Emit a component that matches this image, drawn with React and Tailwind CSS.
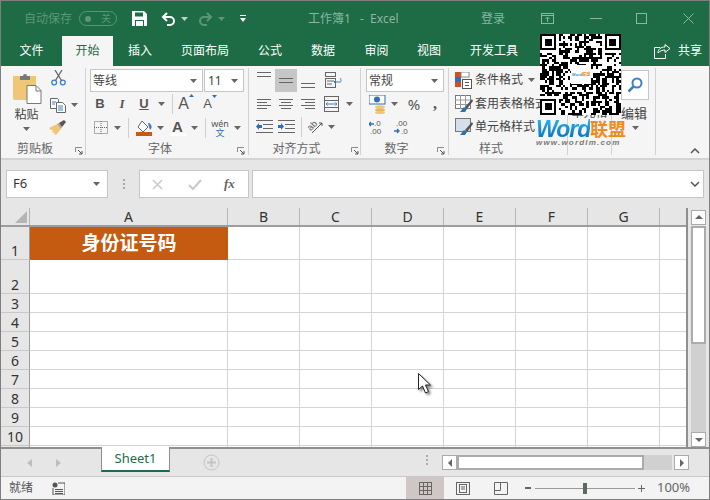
import React from "react";

const Caret = ({ className = "" }) => (
    <svg className={className} width="7" height="4" viewBox="0 0 7 4"><path d="M0 0h7L3.5 4z" fill="#666" /></svg>
);

const Launcher = ({ className = "" }) => (
    <svg className={"absolute " + className} width="8" height="8" viewBox="0 0 8 8" fill="none">
        <path d="M.5 5V.5H7" stroke="#8a8a8a" /><path d="M3 3l4 4M7 4v3H4" stroke="#555" />
    </svg>
);

const Sep = ({ className = "" }) => <div className={"w-px h-[20px] bg-[#cfcfcf] " + className}></div>;

// 3 or 4 strokes, the alignment buttons
const Lines = ({ y = [1, 6, 11], x = [[0, 14], [0, 14], [0, 14]], c = "#666", w = 14, h = 13 }) => (
    <svg width={w} height={h} viewBox={`0 0 ${w} ${h}`}>
        {y.map((v, i) => <rect key={i} x={x[i][0]} y={v} width={x[i][1] - x[i][0]} height="1" fill={c} />)}
    </svg>
);

const Paste = () => (
    <svg width="30" height="32" viewBox="0 0 30 32">
        <path d="M1 4h23v24H3a2 2 0 0 1-2-2z" fill="#f0c678" />
        <path d="M8 4h3a2 2 0 0 1 4 0h3v4H8z" fill="#77787a" />
        <path d="M15 13.5h9l5 5v13H15z" fill="#fff" stroke="#777" />
        <path d="M24 14v5h5" fill="none" stroke="#777" />
    </svg>
);

const Scissors = () => (
    <svg width="15" height="16" viewBox="0 0 15 16" fill="none">
        <circle cx="3.2" cy="12.5" r="2.4" stroke="#3f7fbf" strokeWidth="1.3" />
        <circle cx="11.8" cy="12.5" r="2.4" stroke="#3f7fbf" strokeWidth="1.3" />
        <path d="M4.5 10.5L11 0M10.5 10.5L4 0" stroke="#666" strokeWidth="1.3" />
    </svg>
);

const Copy = () => (
    <svg width="16" height="15" viewBox="0 0 16 15" fill="none">
        <path d="M.5.5h7l1 1v9H.5z" fill="#fff" stroke="#666" />
        <path d="M6.5 4.5h6l3 3v7h-9z" fill="#fff" stroke="#666" />
        <path d="M8 8h5M8 10h5M8 12h5M2 4h4M2 6h3" stroke="#3f7fbf" />
    </svg>
);

const Painter = () => (
    <svg width="18" height="15" viewBox="0 0 18 15">
        <path d="M0 8l8-4 4 5-5 6-2-1 1-2-2 1-1-1 1-2-2 0z" fill="#f0c678" />
        <path d="M8 4l2-1 3 4-1 2z" fill="#b9a27a" />
        <path d="M10 3l5-3 2 2-4 5z" fill="#555" />
    </svg>
);

const Borders = () => (
    <svg width="14" height="13" viewBox="0 0 14 13" fill="none" stroke="#666" strokeDasharray="1 1">
        <rect x=".5" y=".5" width="13" height="12" /><path d="M7 0v13M0 6.5h14" />
    </svg>
);

const Bucket = () => (
    <svg width="17" height="16" viewBox="0 0 17 16">
        <path d="M6 1l6 6-5 5-5-5z" fill="#fff" stroke="#666" />
        <path d="M12 3c2 0 4 2 3.5 5l-1.500 2-1-3z" fill="#3f7fbf" />
        <rect x="0" y="12" width="16" height="4" fill="#c55a11" />
    </svg>
);

const Wrap = () => (
    <svg width="17" height="16" viewBox="0 0 17 16" fill="none">
        <rect x=".5" y=".5" width="10" height="4" stroke="#666" />
        <rect x=".5" y="6.500" width="10" height="9" stroke="#666" />
        <path d="M2 9h7M2 12h5" stroke="#666" />
        <path d="M9 10h6c2 0 1-3 0-4M9 10l2-2M9 10l2 2" stroke="#3f7fbf" />
    </svg>
);

const Merge = () => (
    <svg width="15" height="16" viewBox="0 0 15 16" fill="none">
        <rect x=".5" y=".5" width="14" height="15" stroke="#666" />
        <path d="M0 4.500h15M0 11.500h15" stroke="#666" />
        <path d="M2 8h11M3.500 6.500L2 8l1.500 1.500M11.500 6.500L13 8l-1.500 1.500" stroke="#3f7fbf" />
    </svg>
);

const Indent = ({ flip }) => (
    <svg width="17" height="13" viewBox="0 0 17 13">
        {[0, 4, 8, 12].map(y => <rect key={y} x={y === 4 || y === 8 ? 7 : 0} y={y} width={y === 4 || y === 8 ? 10 : 17} height="1" fill="#666" />)}
        <path d={flip ? "M0 5h3V3l3 3.500-3 3.500V8H0z" : "M6 5H3V3L0 6.500 3 10V8h3z"} fill="#2f6fb5" />
    </svg>
);

const Orient = () => (
    <svg width="17" height="17" viewBox="0 0 17 17" fill="none">
        <text x="1" y="11" fontSize="9" fill="#555" fontFamily="Liberation Sans" transform="rotate(-45 5 9)">ab</text>
        <path d="M5 15L15 5M15 5h-3M15 5v3" stroke="#555" />
    </svg>
);

const Money = () => (
    <svg width="17" height="19" viewBox="0 0 17 19">
        <rect x="0" y="0" width="16" height="9" fill="#fff" stroke="#2f6fb5" />
        <circle cx="8" cy="4.500" r="3" fill="#2f6fb5" />
        <ellipse cx="11" cy="12" rx="5" ry="1.800" fill="#f0c678" />
        <ellipse cx="11" cy="15" rx="5" ry="1.800" fill="#e8b95c" />
        <ellipse cx="11" cy="17.500" rx="5" ry="1.500" fill="#f0c678" />
    </svg>
);

const Decimal = ({ more }) => (
    <svg width="15" height="16" viewBox="0 0 15 16">
        <text x={more ? 2 : 5} y="7" fontSize="8" fill="#555" fontFamily="Liberation Sans">{more ? ".00" : ".0"}</text>
        <text x={more ? 7 : 1} y="15" fontSize="8" fill="#555" fontFamily="Liberation Sans">{more ? ".0" : ".00"}</text>
        {more
            ? <path d="M0 12h5M3 10l2 2-2 2" stroke="#2f6fb5" strokeWidth="1.300" fill="none" />
            : <path d="M0 5h5M2 3L0 5l2 2" stroke="#2f6fb5" strokeWidth="1.300" fill="none" />}
    </svg>
);

const CondFormat = () => (
    <svg width="17" height="17" viewBox="0 0 17 17">
        <rect x="0" y="0" width="6" height="5" fill="#c9502c" /><rect x="6" y="0" width="8" height="5" fill="#fff" stroke="#888" />
        <rect x="0" y="5" width="6" height="5" fill="#2f6fb5" /><rect x="0" y="10" width="6" height="5" fill="#c9502c" />
        <rect x="7.500" y="7.500" width="9" height="9" fill="#fff" stroke="#555" />
        <path d="M10 10.500h4M10 13.500h4" stroke="#555" />
    </svg>
);

const TableFmt = ({ filled }) => (
    <svg width="18" height="18" viewBox="0 0 18 18">
        <rect x=".5" y=".5" width="15" height="13" fill={filled ? "#d5dfea" : "#fff"} stroke="#777" />
        {!filled && <path d="M5.500 0v14M10.500 0v14M0 5h16M0 9.500h16" stroke="#999" />}
        <path d="M17 4l-7 8 2 2 6-8z" fill="#555" />
        <path d="M9 12l3 2-2 3H5z" fill="#2f6fb5" />
    </svg>
);

const Search = () => (
    <svg width="16" height="16" viewBox="0 0 16 16" fill="none">
        <circle cx="10" cy="6" r="4.500" stroke="#3f7fbf" strokeWidth="2" />
        <path d="M6.500 9.500L1.500 14.500" stroke="#3f7fbf" strokeWidth="2.500" />
    </svg>
);

const Share = () => (
    <svg width="17" height="16" viewBox="0 0 17 16" fill="none" stroke="#fff">
        <path d="M6 4.500H.5v11h11V11" />
        <path d="M4 10c0-4 3-6 7-6V1.500L16 5.500 11 9.500V7c-3 0-5 1-7 3z" />
    </svg>
);

// looks like a QR code, same finder squares and density as the picture
const qrCells = () => {
    const n = 35;
    let seed = 4711;
    const cells = [];
    const finder = (x, y) => x >= 0 && x < 7 && y >= 0 && y < 7 && (x === 0 || x === 6 || y === 0 || y === 6 || (x >= 2 && x <= 4 && y >= 2 && y <= 4));
    for (let y = 0; y < n; y++) {
        for (let x = 0; x < n; x++) {
            seed = (seed * 1103515245 + 12345) & 0x7fffffff;
            let on = ((seed >> 12) & 7) < 4;
            if ((x < 8 && y < 8) || (x >= n - 8 && y < 8) || (x < 8 && y >= n - 8)) {
                on = finder(x, y) || finder(x - (n - 7), y) || finder(x, y - (n - 7));
            }
            if (on) cells.push([x, y]);
        }
    }
    return cells;
};

const QR = () => (
    <svg width="81" height="81" viewBox="0 0 35 35" shapeRendering="crispEdges">
        <rect width="35" height="35" fill="#fff" />
        {qrCells().map(([x, y]) => <rect key={x + "-" + y} x={x} y={y} width="1" height="1" fill="#000" />)}
    </svg>
);

const Tab = ({ w, active, children }) => (
    <div className={"flex items-center justify-center h-full text-[12px] " + w + (active ? " bg-[#f5f5f5] text-[#1d6c45]" : " text-white")}>{children}</div>
);

const Label = ({ className = "pr-[16px]", children }) => <div className={"mt-auto h-[14px] -mb-px text-center text-[12px] leading-[14px] text-[#666] " + className}>{children}</div>;

const Group = ({ w, children }) => (
    <div className={"relative flex flex-col h-[87px] mt-[2px] border-r border-[#d2d2d2] shrink-0 " + w}>{children}</div>
);

const colHeads = [["A", "w-[198px]"], ["B", "w-[72px]"], ["C", "w-[72px]"], ["D", "w-[72px]"], ["E", "w-[72px]"], ["F", "w-[72px]"], ["G", "w-[72px]"], ["", "w-[28px]"]];
const rows = [["1", "h-[33px]"], ["2", "h-[34px]"], ...["3", "4", "5", "6", "7", "8", "9", "10", ""].map(n => [n, "h-[19px]"])];

const App = () => {
    return (
        <div className="w-[710px] h-[500px] flex flex-col overflow-hidden border border-[#7f7f7f] bg-[#e6e6e6] relative font-['Noto_Sans','Noto_Sans_CJK_SC',sans-serif]">
            {/* title bar */}
            <div className="h-[35px] shrink-0 bg-[#1d6c45] flex items-center text-[12px] text-[#8db5a1] whitespace-nowrap">
                <span className="ml-[23px] w-[49px] text-[12px] text-[#5c9679]">自动保存</span>
                <div className="ml-[6px] w-[38px] h-[15px] rounded-full border border-[#5c9679] flex items-center px-[5px] justify-between">
                    <span className="w-[6px] h-[6px] rounded-full bg-[#5c9679]"></span>
                    <span className="text-[10px] text-[#5c9679]">关</span>
                </div>
                <svg className="ml-[15px]" width="15" height="15" viewBox="0 0 15 15"><path d="M0 0h12l3 3v12H0z" fill="#fff" /><rect x="3" y="1.500" width="8" height="4" fill="#1d6c45" /><rect x="3" y="9" width="9" height="6" fill="#1d6c45" /><rect x="4" y="10" width="7" height="5" fill="#fff" /></svg>
                <svg className="ml-[14px]" width="15" height="14" viewBox="0 0 15 14" fill="none" stroke="#fff" strokeWidth="2"><path d="M6 1L2 5l4 4M2 5h7a4 4 0 0 1 0 8H6" /></svg>
                <Caret className="ml-[5px] brightness-200" />
                <svg className="ml-[10px]" width="15" height="14" viewBox="0 0 15 14" fill="none" stroke="#5c9679" strokeWidth="2"><path d="M9 1l4 4-4 4M13 5H6a4 4 0 0 0 0 8h3" /></svg>
                <svg className="ml-[5px]" width="7" height="4" viewBox="0 0 7 4"><path d="M0 0h7L3.500 4z" fill="#5c9679" /></svg>
                <svg className="ml-[15px]" width="6" height="7" viewBox="0 0 6 7" fill="#fff"><rect width="6" height="1" /><path d="M0 3h6L3 7z" /></svg>
                <span className="ml-[62px] w-[43px]">工作簿1</span>
                <span className="ml-[9px] w-[42px]">-&nbsp;&nbsp;Excel</span>
                <span className="ml-[79px] w-[24px]">登录</span>
                <svg className="ml-[36px]" width="13" height="11" viewBox="0 0 13 11" fill="none" stroke="#8db5a1"><rect x=".5" y=".5" width="12" height="10" /><path d="M0 2.500h13M6.500 9V4.500M4.500 6l2-2 2 2" /></svg>
                <svg className="ml-[36px]" width="12" height="1" viewBox="0 0 12 1"><rect width="12" height="1" fill="#8db5a1" /></svg>
                <svg className="ml-[34px]" width="11" height="11" viewBox="0 0 11 11" fill="none" stroke="#8db5a1"><rect x=".5" y=".5" width="10" height="10" /></svg>
                <svg className="ml-[36px]" width="11" height="11" viewBox="0 0 11 11" stroke="#8db5a1"><path d="M.5.5l10 10M10.500.5l-10 10" /></svg>
            </div>

            {/* tabs */}
            <div className="h-[30px] shrink-0 bg-[#1d6c45] flex items-center">
                <Tab w="w-[61px]">文件</Tab>
                <Tab w="w-[51px]" active>开始</Tab>
                <Tab w="w-[54px]">插入</Tab>
                <Tab w="w-[76px]">页面布局</Tab>
                <Tab w="w-[54px]">公式</Tab>
                <Tab w="w-[52px]">数据</Tab>
                <Tab w="w-[55px]">审阅</Tab>
                <Tab w="w-[50px]">视图</Tab>
                <Tab w="w-[80px]">开发工具</Tab>
                <div className="ml-auto mr-[7px] flex items-center gap-[7px] text-[12px] text-white"><Share />共享</div>
            </div>

            {/* ribbon */}
            <div className="h-[94px] shrink-0 bg-[#f5f5f5] border-b-2 border-[#d4d4d4] flex text-[#444] whitespace-nowrap">
                <Group w="w-[85px]">
                    <div className="flex">
                        <div className="w-[48px] flex flex-col items-center pl-[3px] pt-[4px]">
                            <Paste />
                            <span className="mt-[3px] text-[12px] leading-[16px]">粘贴</span>
                            <Caret className="mt-[4px]" />
                        </div>
                        <div className="flex flex-col pt-[2px]">
                            <div className="h-[23px] pl-[2px]"><Scissors /></div>
                            <div className="h-[24px] flex items-center gap-[5px] pl-[1px]"><Copy /><Caret /></div>
                            <div className="h-[22px] pt-[3px]"><Painter /></div>
                        </div>
                    </div>
                    <Label>剪贴板</Label>
                    <Launcher className="left-[74px] bottom-0" />
                </Group>

                <Group w="w-[163px]">
                    <div className="flex gap-px pl-[4px] pt-px">
                        <div className="w-[113px] h-[23px] bg-white border border-[#c6c6c6] flex items-center justify-between pl-[2px] pr-[5px] text-[12px]">等线<Caret /></div>
                        <div className="w-[40px] h-[23px] bg-white border border-[#c6c6c6] flex items-center justify-between pl-[3px] pr-[5px] text-[12px]">11<Caret /></div>
                    </div>
                    <div className="flex items-center h-[24px] pl-[4px] text-[#555]">
                        <span className="w-[20px] text-center text-[13px] font-bold font-['Liberation_Sans']">B</span>
                        <span className="w-[24px] text-center text-[13px] italic font-bold font-['Liberation_Serif']">I</span>
                        <span className="w-[20px] text-center text-[13px] font-bold underline font-['Liberation_Sans']">U</span>
                        <div className="w-[14px] flex justify-center"><Caret /></div>
                        <Sep className="ml-[4px]" />
                        <div className="w-[26px] flex justify-center items-start text-[16px] font-['Liberation_Sans']">A<svg className="mt-[2px]" width="5" height="3" viewBox="0 0 5 3"><path d="M0 3h5L2.500 0z" fill="#2f6fb5" /></svg></div>
                        <div className="w-[22px] flex justify-center items-start text-[13px] font-['Liberation_Sans']">A<svg className="mt-[1px]" width="5" height="3" viewBox="0 0 5 3"><path d="M0 0h5L2.500 3z" fill="#2f6fb5" /></svg></div>
                    </div>
                    <div className="flex items-center h-[23px] pl-[4px]">
                        <div className="w-[21px] flex justify-center"><Borders /></div>
                        <div className="w-[12px] flex justify-center"><Caret /></div>
                        <Sep className="ml-[5px]" />
                        <div className="w-[25px] pl-[7px]"><Bucket /></div>
                        <div className="w-[12px] flex justify-center"><Caret /></div>
                        <div className="w-[23px] flex flex-col items-center leading-[13px]">
                            <span className="text-[15px] font-bold text-[#555] font-['Liberation_Sans']">A</span>
                            <span className="w-[16px] h-[3px] bg-white"></span>
                        </div>
                        <div className="w-[10px] flex justify-center"><Caret /></div>
                        <Sep className="ml-[6px]" />
                        <div className="w-[28px] flex flex-col items-center text-[9px] leading-[9px] text-[#555]">wén<span className="text-[#2f6fb5]">文</span></div>
                        <Caret />
                    </div>
                    <Label className="pr-[14px]">字体</Label>
                    <Launcher className="left-[151px] bottom-0" />
                </Group>

                <Group w="w-[112px]">
                    <div className="flex items-center h-[24px] pl-[4px]">
                        <div className="w-[22px] flex justify-center self-start pt-[3px]"><Lines y={[1, 5]} x={[[0, 14], [0, 14]]} h={7} /></div>
                        <div className="w-[22px] h-[23px] bg-[#c6c6c6] flex items-center justify-center"><Lines y={[1, 5]} x={[[0, 14], [0, 14]]} h={7} /></div>
                        <div className="w-[22px] flex justify-center self-end pb-[3px]"><Lines y={[1, 5]} x={[[0, 14], [0, 14]]} h={7} /></div>
                        <div className="w-[28px] flex justify-center"><Wrap /></div>
                    </div>
                    <div className="flex items-center h-[23px] pl-[4px]">
                        <div className="w-[22px] flex justify-center"><Lines y={[1, 4, 7, 10]} x={[[0, 14], [0, 10], [0, 14], [0, 10]]} h={11} /></div>
                        <div className="w-[22px] flex justify-center"><Lines y={[1, 4, 7, 10]} x={[[0, 14], [2, 12], [0, 14], [2, 12]]} h={11} /></div>
                        <div className="w-[22px] flex justify-center"><Lines y={[1, 4, 7, 10]} x={[[0, 14], [4, 14], [0, 14], [4, 14]]} h={11} /></div>
                        <div className="w-[25px] flex justify-center"><Merge /></div>
                        <div className="w-[10px] flex justify-center"><Caret /></div>
                    </div>
                    <div className="flex items-center h-[23px] pl-[4px]">
                        <div className="w-[22px] flex justify-center"><Indent /></div>
                        <div className="w-[22px] flex justify-center"><Indent flip /></div>
                        <Sep className="ml-[4px]" />
                        <div className="w-[26px] flex justify-center"><Orient /></div>
                        <Caret />
                    </div>
                    <Label>对齐方式</Label>
                    <Launcher className="left-[102px] bottom-0" />
                </Group>

                <Group w="w-[88px]">
                    <div className="pl-[5px] pt-px">
                        <div className="w-[78px] h-[23px] bg-white border border-[#c6c6c6] flex items-center justify-between pl-[2px] pr-[5px] text-[12px]">常规<Caret /></div>
                    </div>
                    <div className="flex items-center h-[24px] pl-[8px]">
                        <Money />
                        <Caret className="ml-[5px]" />
                        <span className="ml-[8px] w-[16px] text-center text-[15px] text-[#555]">%</span>
                        <span className="ml-[11px] text-[16px] font-bold leading-[16px] text-[#555] font-['Liberation_Serif']">,</span>
                    </div>
                    <div className="flex items-center h-[22px] pl-[8px] gap-[10px]"><Decimal /><Decimal more /></div>
                    <Label>数字</Label>
                    <Launcher className="left-[76px] bottom-0" />
                </Group>

                <Group w="w-[119px]">
                    <div className="pl-[6px] text-[12px]">
                        <div className="flex items-center h-[24px] gap-[3px]"><CondFormat />条件格式<Caret className="ml-[2px]" /></div>
                        <div className="flex items-center h-[23px] gap-[2px]"><TableFmt />套用表格格式</div>
                        <div className="flex items-center h-[23px] gap-[2px]"><TableFmt filled />单元格样式</div>
                    </div>
                    <Label className="pr-[34px]">样式</Label>
                </Group>

                <Group w="w-[44px]">
                    <div className="mt-[36px] text-center text-[12px]">单元格</div>
                </Group>

                <Group w="w-[44px]">
                    <div className="ml-[9px] mt-[2px] w-[28px] h-[30px] bg-white border border-[#c6c6c6] flex items-center justify-center"><Search /></div>
                    <div className="ml-[9px] mt-[5px] text-[13px] leading-[16px]">编辑</div>
                    <Caret className="ml-[20px] mt-[5px]" />
                </Group>

                <div className="flex-1 flex justify-end items-end pr-[9px] pb-[4px]">
                    <svg width="10" height="6" viewBox="0 0 10 6" fill="none" stroke="#555" strokeWidth="1.500"><path d="M1 5l4-4 4 4" /></svg>
                </div>
            </div>

            {/* formula bar */}
            <div className="h-[48px] shrink-0 flex pt-[10px] pl-[5px] pr-[5px]">
                <div className="w-[102px] h-[28px] bg-white border border-[#c6c6c6] flex items-center justify-between pl-[6px] pr-[7px] text-[13px] text-[#333]">F6<Caret /></div>
                <div className="w-[31px] h-[28px] flex flex-col items-center justify-center gap-[2px]">
                    <span className="w-[2px] h-[2px] bg-[#aaa]"></span><span className="w-[2px] h-[2px] bg-[#aaa]"></span><span className="w-[2px] h-[2px] bg-[#aaa]"></span>
                </div>
                <div className="w-[110px] h-[28px] bg-white border border-[#c6c6c6] flex items-center">
                    <svg className="ml-[12px]" width="11" height="11" viewBox="0 0 11 11" stroke="#c8c8c8" strokeWidth="1.500"><path d="M1 1l9 9M10 1l-9 9" /></svg>
                    <svg className="ml-[25px]" width="14" height="11" viewBox="0 0 14 11" fill="none" stroke="#c8c8c8" strokeWidth="2"><path d="M1 6l4 4 8-9" /></svg>
                    <span className="ml-[22px] text-[13px] italic font-bold text-[#666] font-['Liberation_Serif']">fx</span>
                </div>
                <div className="ml-[3px] flex-1 h-[28px] bg-white border border-[#c6c6c6] flex items-center justify-end pr-[3px]">
                    <svg width="10" height="6" viewBox="0 0 10 6" fill="none" stroke="#555" strokeWidth="1.500"><path d="M1 1l4 4 4-4" /></svg>
                </div>
            </div>

            {/* sheet */}
            <div className="h-[241px] shrink-0 flex border-b-2 border-[#8f8f8f] overflow-hidden">
                <div className="w-[687px] shrink-0 border-r-2 border-[#8f8f8f] overflow-hidden">
                    <div className="flex h-[19px] border-b-2 border-[#9d9d9d]">
                        <div className="w-[29px] shrink-0 border-r border-[#b5b5b5] flex items-end justify-end pr-[2px] pb-[2px]">
                            <svg width="12" height="12" viewBox="0 0 12 12"><path d="M12 0v12H0z" fill="#b5b5b5" /></svg>
                        </div>
                        {colHeads.map(([c, w]) => (
                            <div key={c} className={"shrink-0 border-r border-[#b5b5b5] text-center text-[14px] leading-[18px] text-[#333] " + w}>{c}</div>
                        ))}
                    </div>
                    {rows.map(([n, h]) => (
                        <div key={n} className={"flex " + h}>
                            <div className="w-[29px] shrink-0 border-r border-[#9d9d9d] border-b border-b-[#c8c8c8] flex items-end justify-center text-[14px] leading-[17px] text-[#333]">{n}</div>
                            {colHeads.map(([c, w]) => (
                                n === "1" && c === "A"
                                    ? <div key={c} className={"shrink-0 bg-[#c55a11] flex items-center justify-center text-[19px] font-bold text-white " + w}>身份证号码</div>
                                    : <div key={c} className={"shrink-0 bg-white border-r border-b border-[#d4d4d4] " + w}></div>
                            ))}
                        </div>
                    ))}
                </div>
                {/* vertical scrollbar */}
                <div className="w-[15px] ml-[3px] flex flex-col pt-[2px]">
                    <div className="h-[15px] bg-white border border-[#ababab] flex items-center justify-center">
                        <svg width="8" height="4" viewBox="0 0 8 4"><path d="M0 4h8L4 0z" fill="#666" /></svg>
                    </div>
                    <div className="h-[120px] mt-px bg-white border-2 border-[#ababab]"></div>
                    <div className="h-[89px] bg-[#d0d0d0]"></div>
                    <div className="h-[15px] bg-white border border-[#ababab] flex items-center justify-center">
                        <svg width="8" height="4" viewBox="0 0 8 4"><path d="M0 0h8L4 4z" fill="#666" /></svg>
                    </div>
                </div>
            </div>

            {/* sheet tabs */}
            <div className="h-[27px] shrink-0 flex items-start">
                <svg className="ml-[26px] mt-[10px]" width="5" height="8" viewBox="0 0 5 8"><path d="M5 0v8L0 4z" fill="#bdbdbd" /></svg>
                <svg className="ml-[24px] mt-[10px]" width="5" height="8" viewBox="0 0 5 8"><path d="M0 0v8l5-4z" fill="#bdbdbd" /></svg>
                <div className="ml-[40px] w-[69px] h-[25px] -mt-[2px] border-x border-[#8f8f8f] border-b-2 border-b-[#1d6c45] bg-white flex items-center justify-center text-[13px] text-[#1d6c45]">Sheet1</div>
                <svg className="ml-[33px] mt-[5px]" width="17" height="17" viewBox="0 0 17 17" fill="none" stroke="#c4c4c4"><circle cx="8.500" cy="8.500" r="7.500" /><path d="M8.500 4v9M4 8.500h9" strokeWidth="2" /></svg>
                <div className="ml-[206px] mt-[6px] flex flex-col gap-[2px]">
                    <span className="w-[2px] h-[2px] bg-[#aaa]"></span><span className="w-[2px] h-[2px] bg-[#aaa]"></span><span className="w-[2px] h-[2px] bg-[#aaa]"></span>
                </div>
                <div className="ml-[14px] mt-[6px] flex h-[15px]">
                    <div className="w-[15px] bg-white border border-[#ababab] flex items-center justify-center">
                        <svg width="4" height="8" viewBox="0 0 4 8"><path d="M4 0v8L0 4z" fill="#666" /></svg>
                    </div>
                    <div className="w-[187px] bg-white border-2 border-[#ababab]"></div>
                    <div className="w-[28px] bg-[#d0d0d0]"></div>
                    <div className="ml-[2px] w-[15px] bg-white border border-[#ababab] flex items-center justify-center">
                        <svg width="4" height="8" viewBox="0 0 4 8"><path d="M0 0v8l4-4z" fill="#666" /></svg>
                    </div>
                </div>
            </div>

            {/* status bar */}
            <div className="flex-1 min-h-0 bg-[#f3f3f3] border-t border-[#c8c8c8] flex items-center text-[12px] text-[#555] whitespace-nowrap">
                <span className="ml-[8px] w-[24px]">就绪</span>
                <svg className="ml-[19px]" width="13" height="13" viewBox="0 0 13 13"><circle cx="3" cy="3" r="2.500" fill="#555" /><path d="M6 1h7v12H1V6" fill="none" stroke="#555" /><path d="M3 7h8v1H3zM3 9h8v1H3zM3 11h8v1H3z" fill="#555" /></svg>
                <div className="ml-[341px] w-[38px] h-full bg-[#cfc6c6] flex items-center justify-center">
                    <svg width="13" height="13" viewBox="0 0 13 13" fill="none" stroke="#666"><rect x=".5" y=".5" width="12" height="12" /><path d="M4.500 0v13M8.500 0v13M0 4.500h13M0 8.500h13" /></svg>
                </div>
                <svg className="ml-[12px]" width="14" height="13" viewBox="0 0 14 13" fill="none" stroke="#666"><rect x=".5" y=".5" width="13" height="12" /><rect x="3.500" y="2.500" width="7" height="8" /><path d="M5 5h4M5 7h4" /></svg>
                <svg className="ml-[24px]" width="14" height="13" viewBox="0 0 14 13" fill="none" stroke="#666"><path d="M.5.5h13v12H.5zM.5 8.500h6V.5" /></svg>
                <span className="ml-[17px] w-[6px] h-[2px] bg-[#666]"></span>
                <div className="ml-[4px] w-[100px] h-px bg-[#9a9a9a] relative">
                    <span className="absolute left-[48px] -top-[5px] w-[4px] h-[11px] bg-[#5b6b60]"></span>
                </div>
                <svg className="ml-[3px]" width="7" height="7" viewBox="0 0 7 7" fill="#666"><path d="M3 0h1v3h3v1H4v3H3V4H0V3h3z" /></svg>
                <span className="ml-[12px] text-[13px] text-[#666]">100%</span>
            </div>

            {/* watermark over the ribbon */}
            <div className="absolute left-[539px] top-[33px] w-[81px] h-[81px]">
                <QR />
                <div className="absolute left-[31px] top-[31px] w-[20px] h-[19px] bg-white flex flex-col items-center justify-center text-[4px] leading-[6px] whitespace-nowrap">
                    <span className="font-bold text-[#2f9be0]">Word<span className="text-[#f08a1d]">联盟</span></span>
                </div>
            </div>
            <div className="absolute left-[535px] top-[118px] w-[94px] flex flex-col whitespace-nowrap">
                <div className="flex items-center h-[20px] leading-[20px]">
                    <span className="w-[54px] text-[23px] font-bold italic tracking-[-1px] font-['Liberation_Sans'] bg-linear-to-b from-[#27b2ec] to-[#0d6fbd] bg-clip-text text-transparent">Word</span>
                    <span className="text-[18px] font-bold text-[#f08a1d]">联盟</span>
                </div>
                <span className="text-[8px] leading-[8px] font-bold italic tracking-[1.200px] text-[#7a7a7a] font-['Liberation_Sans']">www.wordlm.com</span>
            </div>

            {/* mouse pointer */}
            <svg className="absolute left-[417px] top-[372px] drop-shadow-[2px_2px_1px_rgba(0,0,0,0.45)]" width="14" height="22" viewBox="0 0 14 22">
                <path d="M.5.5v16l4-3.500 3 7 3-1.500-3-6.500h5z" fill="#fff" stroke="#222" />
            </svg>
        </div>
    );
};

export default App;
